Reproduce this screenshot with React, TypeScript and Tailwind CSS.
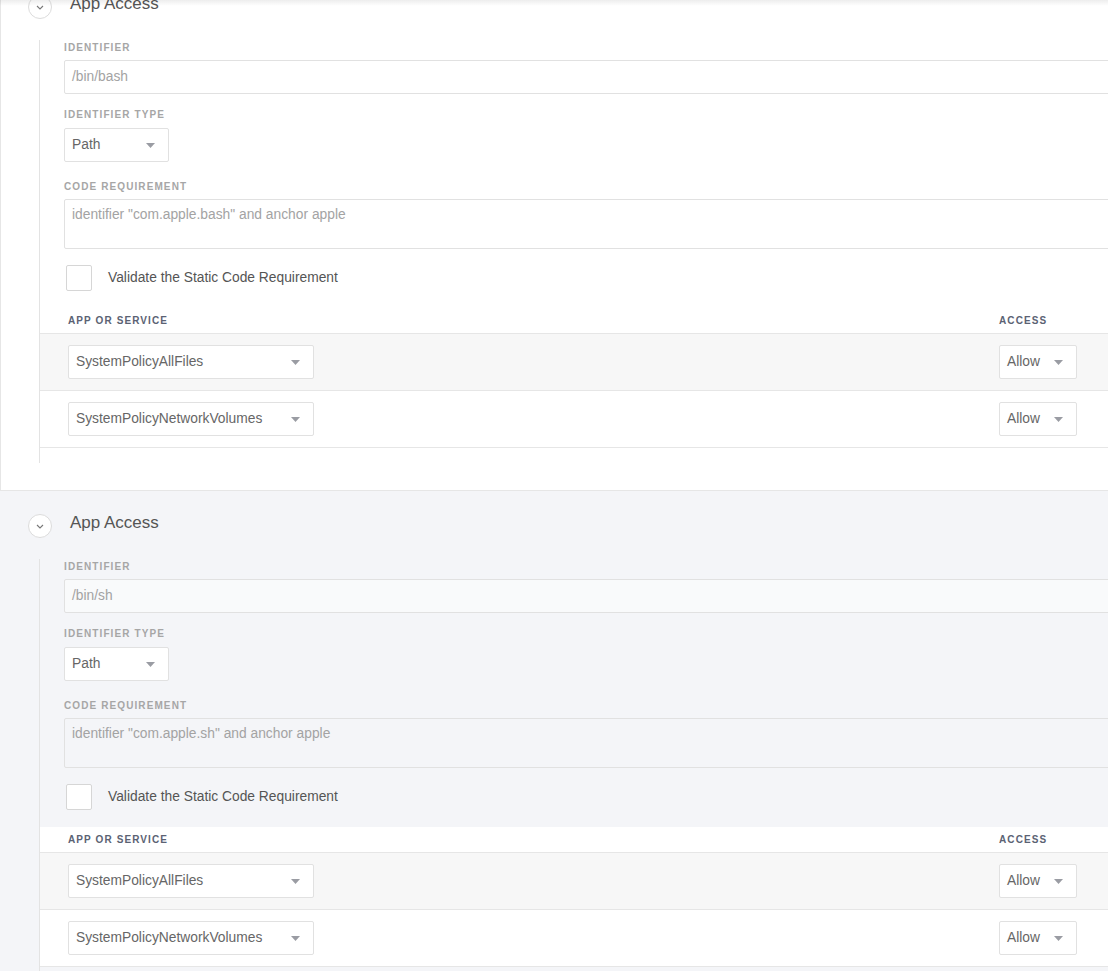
import React from 'react';

type Row = { service: string; access: string };

type Entry = {
  identifier: string;
  requirement: string;
  tinted: boolean;
};

const rows: Row[] = [
  { service: 'SystemPolicyAllFiles', access: 'Allow' },
  { service: 'SystemPolicyNetworkVolumes', access: 'Allow' },
];

const entries: Entry[] = [
  { identifier: '/bin/bash', requirement: 'identifier "com.apple.bash" and anchor apple', tinted: false },
  { identifier: '/bin/sh', requirement: 'identifier "com.apple.sh" and anchor apple', tinted: true },
];

const Caret: React.FC = () => (
  <svg width="9" height="5" viewBox="0 0 9 5" className="shrink-0">
    <path d="M0 0 H9 L4.5 5 Z" fill="#9a9ca3" />
  </svg>
);

const Label: React.FC<{ children: React.ReactNode; className?: string }> = ({ children, className = '' }) => (
  <div className={`h-4 leading-4 text-[10px] font-bold tracking-[1.1px] text-[#a6a6a6] ${className}`}>{children}</div>
);

const Select: React.FC<{ value: string; className: string }> = ({ value, className }) => (
  <div
    className={`flex items-center justify-between h-[34px] pl-[7px] pr-[13px] bg-white border border-[#e1e1e1] rounded-[2px] text-[13.8px] text-[#666] ${className}`}
  >
    <span>{value}</span>
    <Caret />
  </div>
);

const Section: React.FC<{ entry: Entry; first?: boolean }> = ({ entry, first }) => {
  const t = entry.tinted;
  return (
    <section
      className={`pt-[23px] pb-[27px] border-b border-[#e6e6e6] ${
        first ? '-mt-[28px] bg-white shadow-[inset_1px_0_0_#e6e6e6]' : 'bg-[#f4f5f8]'
      }`}
    >
      <div className="flex items-center h-6">
        <div className="ml-7 w-6 h-6 rounded-full border border-[#dcdcdc] bg-white flex items-center justify-center">
          <svg width="8" height="5" viewBox="0 0 8 5">
            <path d="M1 1 L4 4 L7 1" fill="none" stroke="#777" strokeWidth="1.1" />
          </svg>
        </div>
        <h2 className="ml-[18px] text-[17px] leading-6 -mt-[6px] text-[#555] font-normal">App Access</h2>
      </div>

      <div className="mt-[21px] ml-[39px] border-l border-[#e3e3e3] pl-6 pb-[15px]">
        <Label className="mb-1">IDENTIFIER</Label>
        <div
          className={`h-[34px] flex items-center px-[7px] border border-[#e1e1e1] rounded-[2px] text-[13.8px] text-[#a3a3a3] ${
            t ? 'bg-[#f9fafb]' : 'bg-white'
          }`}
        >
          {entry.identifier}
        </div>

        <Label className="mt-[13px] mb-[5px]">IDENTIFIER TYPE</Label>
        <Select value="Path" className="w-[105px] h-[33px]" />

        <Label className="mt-[17px] mb-1">CODE REQUIREMENT</Label>
        <div
          className={`h-[50px] px-[7px] pt-[5px] border border-[#e1e1e1] rounded-[2px] text-[13.8px] text-[#a3a3a3] ${
            t ? 'bg-[#f4f5f8]' : 'bg-white'
          }`}
        >
          {entry.requirement}
        </div>

        <div className="mt-[16px] flex items-center h-[26px]">
          <div className="ml-[2px] w-[26px] h-[26px] bg-white border border-[#d6d6d6] rounded-[2px]" />
          <span className="ml-4 text-[13.8px] text-[#555]">Validate the Static Code Requirement</span>
        </div>

        <div className="mt-[17px] -ml-6 bg-white">
          <div className="flex h-[26px] border-b border-[#e6e6e6] items-center text-[10px] font-bold tracking-[1.1px] text-[#5b6273]">
            <div className="flex-1 pl-7">APP OR SERVICE</div>
            <div className="w-[141px]">ACCESS</div>
          </div>
          {rows.map((r, i) => (
            <div
              key={r.service}
              className={`flex items-center py-[11px] border-b border-[#e6e6e6] ${i === 0 ? 'bg-[#f7f7f7]' : 'bg-white'}`}
            >
              <div className="flex-1 pl-7">
                <Select value={r.service} className="w-[246px]" />
              </div>
              <div className="w-[141px]">
                <Select value={r.access} className="w-[78px]" />
              </div>
            </div>
          ))}
        </div>
      </div>
    </section>
  );
};

const App: React.FC = () => {
  return (
    <div className="relative w-[1108px] min-h-[971px] overflow-hidden bg-white font-['Liberation_Sans',Arial,sans-serif]">
      <div className="w-[1140px]">
        {entries.map((e, i) => (
          <Section key={e.identifier} entry={e} first={i === 0} />
        ))}
      </div>
      <div className="absolute top-0 left-0 right-0 h-[6px] bg-gradient-to-b from-[#00000012] to-transparent" />
    </div>
  );
};

export default App;
